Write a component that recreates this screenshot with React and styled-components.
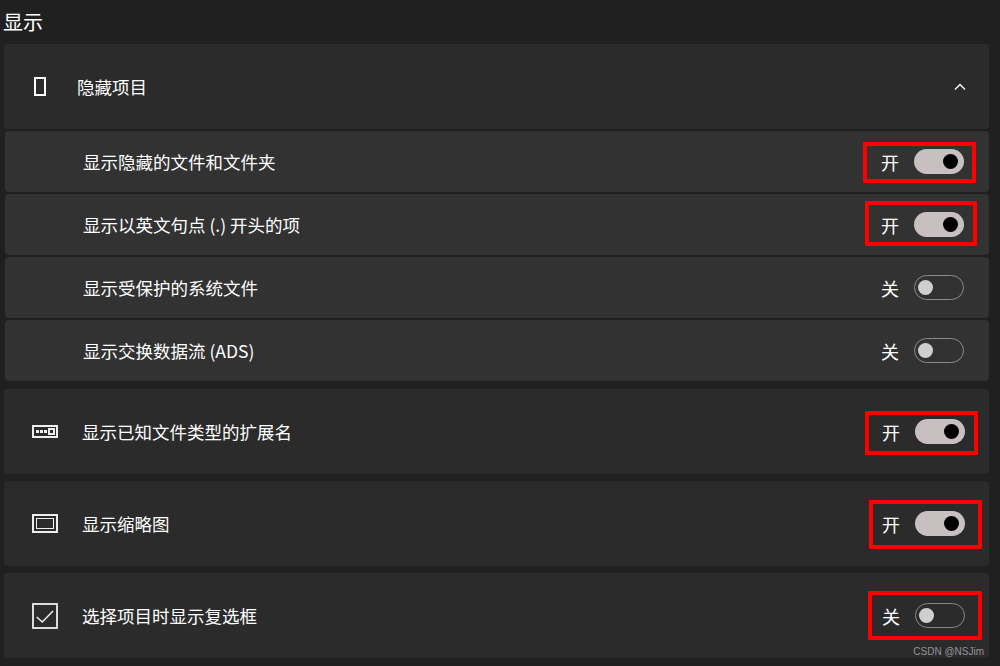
import React from 'react';
import styled, { createGlobalStyle } from 'styled-components';

const GlobalStyle = createGlobalStyle`
  html, body {
    margin: 0;
    padding: 0;
    background: #202020;
  }
  body {
    font-family: "Noto Sans CJK SC", "Liberation Sans", sans-serif;
    color: #fff;
  }
`;

const Page = styled.div`
  position: relative;
  width: 1000px;
  height: 666px;
  overflow: hidden;
  box-sizing: border-box;
  padding: 0 11px 0 4px;
  background: #202020;
`;

const Title = styled.div`
  height: 44px;
  line-height: 43px;
  font-size: 20px;
  margin-left: -1px;
`;

const Group = styled.div`
  margin-bottom: 8px;
`;

const Card = styled.div`
  display: flex;
  align-items: center;
  height: 85px;
  margin-bottom: ${(p) => p.$gap ?? 7}px;
  padding: 0 24px 0 27px;
  background: #2b2b2b;
  border-radius: 4px;
`;

const SubRow = styled.div`
  display: flex;
  align-items: center;
  height: 61px;
  margin: 0 0 2px 1px;
  padding: 0 25px 0 78px;
  background: #323232;
  border-radius: 4px;
`;

const IconBox = styled.div`
  display: flex;
  justify-content: center;
  align-items: center;
  width: 28px;
  margin-right: 23px;
`;

const HeaderIconBox = styled.div`
  display: flex;
  width: 13px;
  margin: 0 30px 0 3px;
`;

const Label = styled.div`
  flex: 1;
  font-size: 17.5px;
  line-height: 24px;
  color: #fff;
`;

const Chevron = styled.svg`
  display: block;
  margin-right: -1px;
`;

const Control = styled.div`
  position: relative;
  display: flex;
  align-items: center;
  gap: 15px;
`;

const State = styled.span`
  font-size: 18px;
  line-height: 24px;
  width: 18px;
`;

const Switch = styled.div`
  display: flex;
  align-items: center;
  box-sizing: border-box;
  width: 50px;
  height: 25px;
  border-radius: 13px;
  justify-content: ${(p) => (p.$on ? 'flex-end' : 'flex-start')};
  padding: ${(p) => (p.$on ? '0 6px' : '0 3px')};
  background: ${(p) => (p.$on ? '#c8c0c0' : 'transparent')};
  border: ${(p) => (p.$on ? 'none' : '1px solid #8a8a8a')};
`;

const Knob = styled.div`
  width: 15px;
  height: 15px;
  border-radius: 50%;
  background: ${(p) => (p.$on ? '#000' : '#cfcfcf')};
`;

// red annotation drawn over the screenshot
const Highlight = styled.div`
  position: absolute;
  left: ${(p) => p.$l}px;
  right: ${(p) => p.$r}px;
  top: ${(p) => p.$t}px;
  bottom: ${(p) => p.$b}px;
  border: 4px solid #fe0000;
  border-radius: 1px;
`;

const Watermark = styled.div`
  position: absolute;
  right: 16px;
  bottom: 8px;
  font-family: "Liberation Sans", sans-serif;
  font-size: 10px;
  line-height: 13px;
  color: #959595;
`;

function Toggle({ on, box }) {
  return (
    <Control>
      <State>{on ? '开' : '关'}</State>
      <Switch $on={on}>
        <Knob $on={on} />
      </Switch>
      {box && <Highlight $l={box[0]} $r={box[1]} $t={box[2]} $b={box[3]} />}
    </Control>
  );
}

const HiddenIcon = () => (
  <svg width="13" height="19" viewBox="0 0 13 19" shapeRendering="crispEdges">
    <rect x="1" y="1" width="10" height="17" fill="none" stroke="#fff" strokeWidth="2" />
  </svg>
);

const ExtensionIcon = () => (
  <svg width="26" height="13" viewBox="0 0 26 13" shapeRendering="crispEdges">
    <rect x="1" y="1" width="24" height="11" fill="none" stroke="#eee" strokeWidth="2" />
    <rect x="4" y="5" width="3" height="3" fill="#eee" />
    <rect x="8" y="5" width="3" height="3" fill="#eee" />
    <rect x="12" y="5" width="3" height="3" fill="#eee" />
    <rect x="17" y="4" width="5" height="5" fill="none" stroke="#eee" strokeWidth="2" />
  </svg>
);

const ThumbIcon = () => (
  <svg width="26" height="19" viewBox="0 0 26 19" shapeRendering="crispEdges">
    <rect x="1" y="1" width="24" height="17" fill="none" stroke="#eee" strokeWidth="2" />
    <rect x="4.5" y="4.5" width="17" height="10" fill="none" stroke="#eee" strokeWidth="1" />
  </svg>
);

const CheckIcon = () => (
  <svg width="26" height="26" viewBox="0 0 26 26">
    <rect x="1" y="1" width="24" height="24" fill="none" stroke="#eee" strokeWidth="1.8" />
    <path d="M4.7 14 L10.3 19 L21 8" fill="none" stroke="#eee" strokeWidth="1.5" />
  </svg>
);

const subRows = [
  { label: '显示隐藏的文件和文件夹', on: true, box: [-18, -12, -7, -9] },
  { label: '显示以英文句点 (.) 开头的项', on: true, box: [-16, -13, -11, -9] },
  { label: '显示受保护的系统文件', on: false },
  { label: '显示交换数据流 (ADS)', on: false },
];

const cards = [
  { label: '显示已知文件类型的扩展名', on: true, icon: <ExtensionIcon />, box: [-17, -13, -8, -11] },
  { label: '显示缩略图', on: true, icon: <ThumbIcon />, box: [-13, -17, -11, -13] },
  { label: '选择项目时显示复选框', on: false, icon: <CheckIcon />, box: [-14, -17, -12, -12] },
];

export default function App() {
  return (
    <Page>
      <GlobalStyle />
      <Title>显示</Title>
      <Group>
        <Card $gap={2}>
          <HeaderIconBox>
            <HiddenIcon />
          </HeaderIconBox>
          <Label>隐藏项目</Label>
          <Chevron width="12" height="8" viewBox="0 0 12 8">
            <path d="M1 6.5 L6 1.5 L11 6.5" fill="none" stroke="#fff" strokeWidth="1.3" />
          </Chevron>
        </Card>
        {subRows.map((row) => (
          <SubRow key={row.label}>
            <Label>{row.label}</Label>
            <Toggle on={row.on} box={row.box} />
          </SubRow>
        ))}
      </Group>
      {cards.map((card) => (
        <Card key={card.label}>
          <IconBox>{card.icon}</IconBox>
          <Label>{card.label}</Label>
          <Toggle on={card.on} box={card.box} />
        </Card>
      ))}
      <Watermark>CSDN @NSJim</Watermark>
    </Page>
  );
}
